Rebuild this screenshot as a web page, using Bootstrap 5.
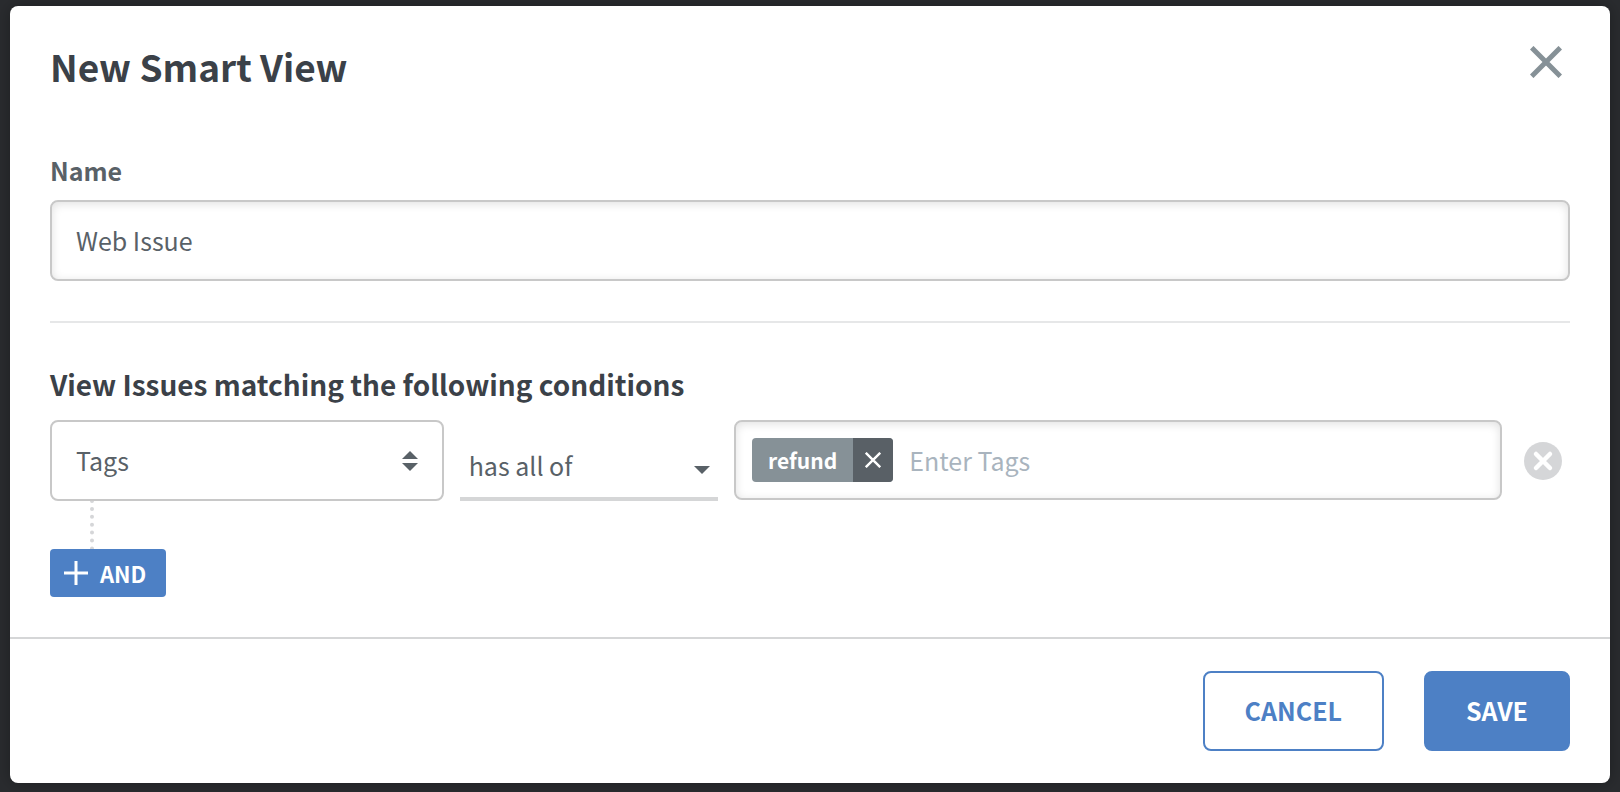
<!DOCTYPE html>
<html lang="en">
<head>
<meta charset="utf-8">
<meta name="viewport" content="width=device-width, initial-scale=1">
<title>New Smart View</title>
<link href="https://cdn.jsdelivr.net/npm/bootstrap@5.3.0/dist/css/bootstrap.min.css" rel="stylesheet">
<style>
  :root { --ink: #3b4148; --slate: #596167; --line: #c8c8c8; --brand: #4d80c5; }
  body { background: #2a2c2f; color: var(--slate); font-family: "Noto Sans CJK SC", "Open Sans", sans-serif; font-size: 25px; line-height: 32px; }
  .view-panel { margin: 6px 10px 10px; border-radius: 8px; box-shadow: 0 0 16px rgba(0, 0, 0, .3); }
  .panel-top { padding: 40px 48px 0 40px; }
  .panel-main { padding: 68px 40px 40px; }
  .panel-end { padding: 32px 40px; gap: 40px; border-top: 2px solid #d5d6d7; }
  h1 { font-size: 37px; line-height: 40px; color: var(--ink); }
  h2 { font-size: 28px; line-height: 36px; margin-bottom: 18px; color: var(--ink); }
  .close-btn svg, .icon-btn svg { display: block; }
  .field-label { margin-bottom: 14px; }
  .field-box { height: 81px; border: 2px solid var(--line); border-radius: 8px; color: var(--slate); font-size: 25px; line-height: 40px; padding: 0 24px 2px; }
  .field-inset { box-shadow: inset 0 2px 10px rgba(0, 0, 0, .12); }
  .field-box:focus { color: var(--slate); }
  .rule { height: 2px; background: #e6e7e8; margin: 40px 0 43px; }
  .cond-field { flex: 0 0 25.9%; }
  .cond-op { flex: 0 0 17%; }
  .field-select { background-position: right 24px center; background-size: 16px 20px;
    background-image: url("data:image/svg+xml,%3Csvg xmlns='http://www.w3.org/2000/svg' viewBox='0 0 16 20'%3E%3Cpath fill='%23596167' d='M8 0l8 8H0zM8 20l8-8H0z'/%3E%3C/svg%3E"); }
  .op-select { height: 81px; padding: 12px 40px 0 9px; border: 0; border-bottom: 4px solid #d5d6d7; border-radius: 0; color: var(--slate); font-size: 25px; line-height: 40px;
    background-position: right 8px top 46px; background-size: 16px 8px;
    background-image: url("data:image/svg+xml,%3Csvg xmlns='http://www.w3.org/2000/svg' viewBox='0 0 16 8'%3E%3Cpath fill='%23596167' d='M0 0h16L8 8z'/%3E%3C/svg%3E"); }
  .tag-field { height: 80px; padding: 0 16px; gap: 16px; }
  .tag-chip { height: 44px; border-radius: 4px; background: #869197; color: #fff; font-size: 21px; overflow: hidden; }
  .tag-chip button { width: 40px; background: #596066; }
  .tag-entry { height: 44px; line-height: 40px; color: var(--slate); outline: 0; min-width: 0; }
  .tag-entry::placeholder { color: #a9b4be; opacity: 1; line-height: 40px; }
  .remove-btn { padding: 0 8px 0 6px; }
  .join-line { display: block; margin-left: 40px; }
  .and-btn { height: 48px; padding: 0 20px 0 14px; gap: 12px; border-radius: 4px; font-size: 22px; }
  .act-btn { height: 80px; padding: 0 40px 2px; border-radius: 8px; border: 2px solid var(--brand); font-size: 25px; }
  .fill-btn, .fill-btn:hover { background: var(--brand); color: #fff; }
  .line-btn { color: var(--brand); background: #fff; }
</style>
</head>
<body>
<main class="view-panel bg-white">
  <form>
    <header class="panel-top d-flex justify-content-between align-items-start">
      <h1 class="fw-bold mb-0">New Smart View</h1>
      <button type="button" class="close-btn border-0 bg-transparent p-0" aria-label="Close">
        <svg width="32" height="32" viewBox="0 0 32 32" fill="none" stroke="#869197" stroke-width="5"><path d="M1.7 1.7l28.6 28.6M30.3 1.7L1.7 30.3"/></svg>
      </button>
    </header>
    <div class="panel-main">
      <label for="viewName" class="field-label d-block fw-bold">Name</label>
      <input id="viewName" type="text" class="form-control field-box field-inset" value="Web Issue">
      <div class="rule"></div>
      <h2 class="fw-bold">View Issues matching the following conditions</h2>
      <div class="d-flex align-items-start gap-3">
        <div class="cond-field">
          <select class="form-select field-box field-select" aria-label="Condition field"><option>Tags</option></select>
        </div>
        <div class="cond-op">
          <select class="form-select op-select" aria-label="Condition operator"><option>has all of</option></select>
        </div>
        <div class="field-box field-inset tag-field d-flex flex-fill align-items-center">
          <span class="tag-chip d-flex fw-bold">
            <span class="px-3 align-self-center">refund</span>
            <button type="button" class="icon-btn border-0 p-0 d-flex align-items-center justify-content-center" aria-label="Remove refund">
              <svg width="16" height="16" viewBox="0 0 16 16" fill="none" stroke="#fff" stroke-width="2.4"><path d="M.8.8l14.4 14.4M15.2.8L.8 15.2"/></svg>
            </button>
          </span>
          <input type="text" class="tag-entry flex-fill border-0 bg-transparent p-0" placeholder="Enter Tags" aria-label="Enter Tags">
        </div>
        <button type="button" class="remove-btn icon-btn border-0 bg-transparent align-self-center" aria-label="Remove condition">
          <svg width="38" height="38" viewBox="0 0 38 38"><circle cx="19" cy="19" r="19" fill="#d5d6d8"/><path d="M12 12l14 14M26 12L12 26" stroke="#fff" stroke-width="4.500" stroke-linecap="round"/></svg>
        </button>
      </div>
      <svg class="join-line" width="4" height="48" viewBox="0 0 4 48"><path d="M2 0v48" stroke="#d5d6d8" stroke-width="4" stroke-linecap="round" stroke-dasharray="0 7.900"/></svg>
      <button type="button" class="and-btn fill-btn border-0 d-flex align-items-center fw-bold">
        <svg width="24" height="24" viewBox="0 0 24 24" stroke="#fff" stroke-width="3"><path d="M12 0v24M0 12h24"/></svg>
        AND
      </button>
    </div>
    <footer class="panel-end d-flex justify-content-end">
      <button type="button" class="act-btn line-btn fw-bold">CANCEL</button>
      <button type="submit" class="act-btn fill-btn fw-bold">SAVE</button>
    </footer>
  </form>
</main>
<script src="https://cdn.jsdelivr.net/npm/bootstrap@5.3.0/dist/js/bootstrap.bundle.min.js"></script>
</body>
</html>
